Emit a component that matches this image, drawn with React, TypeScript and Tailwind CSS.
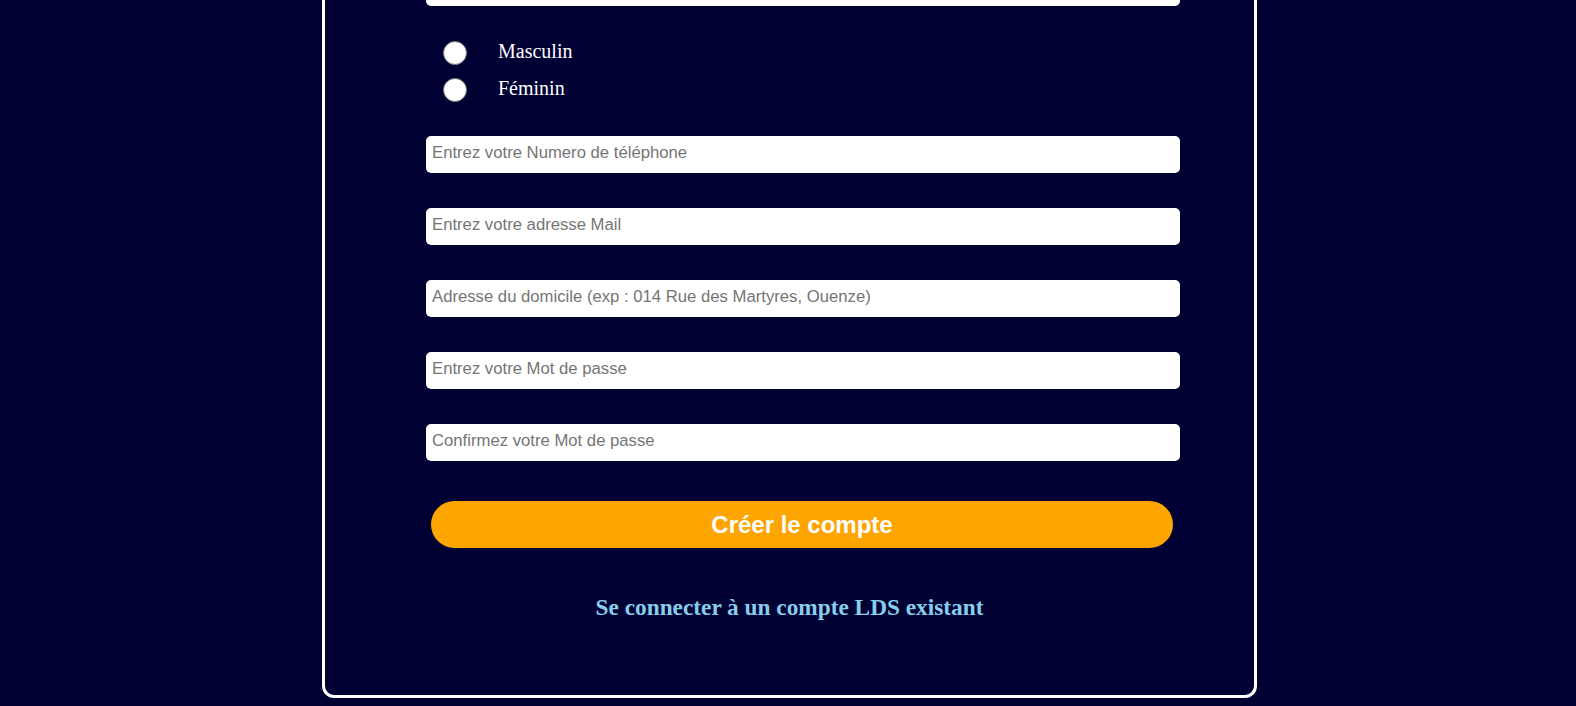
const fields = [
  'Entrez votre Numero de téléphone',
  'Entrez votre adresse Mail',
  'Adresse du domicile (exp : 014 Rue des Martyres, Ouenze)',
  'Entrez votre Mot de passe',
  'Confirmez votre Mot de passe',
];

function Field({ placeholder, className = '' }: { placeholder: string; className?: string }) {
  return (
    <input
      type="text"
      placeholder={placeholder}
      className={`block h-[37px] w-[754px] rounded-[5px] bg-white px-[6px] pb-[3px] text-[16.7px] text-black outline-none placeholder:text-[#757575] font-['Liberation_Sans',Arial,sans-serif] ${className}`}
    />
  );
}

function Radio({ label }: { label: string }) {
  return (
    <label className="flex h-[37px] items-center">
      <span className="ml-[17px] h-[24px] w-[24px] rounded-full border border-[#767676] bg-white" />
      <span className="ml-[31px] pb-[4px] text-[20px] text-white font-['Liberation_Serif','Times_New_Roman',serif]">{label}</span>
    </label>
  );
}

export default function App() {
  return (
    <div className="h-[706px] overflow-hidden bg-[#000033]">
      <div className="flex justify-center pl-[3px]">
        {/* Card */}
        <div className="-mt-[60px] w-[935px] rounded-[12px] border-[3px] border-white">
          <div className="pl-[101px] pt-[26px]">
            <Field placeholder="Date de naissance" />

            {/* Sexe */}
            <div className="mt-[28px]">
              <Radio label="Masculin" />
              <Radio label="Féminin" />
            </div>

            <div className="mt-[28px] flex flex-col gap-[35px]">
              {fields.map((f) => (
                <Field key={f} placeholder={f} />
              ))}
            </div>

            <button className="ml-[5px] mt-[40px] h-[47px] w-[742px] rounded-full bg-[#FFA500] text-[24px] font-bold text-white font-['Liberation_Sans',Arial,sans-serif]">
              Créer le compte
            </button>
          </div>

          <div className="mt-[45px] pb-[74px] text-center">
            <a href="#" className="text-[23.3px] leading-[28px] font-bold text-[#87CEEB] font-['Liberation_Serif','Times_New_Roman',serif]">
              Se connecter à un compte LDS existant
            </a>
          </div>
        </div>
      </div>
    </div>
  );
}
